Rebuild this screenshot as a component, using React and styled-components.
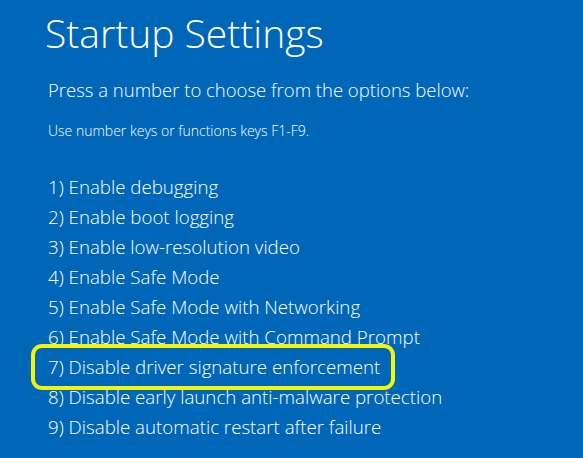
import React from 'react';
import styled, { createGlobalStyle } from 'styled-components';

const GlobalStyle = createGlobalStyle`
  html, body {
    margin: 0;
    padding: 0;
    background-color: #0067b8;
  }
`;

const Screen = styled.main`
  box-sizing: border-box;
  width: 583px;
  height: 458px;
  padding: 6px 0 0 45px;
  background-color: #0067b8;
  color: #ffffff;
  font-family: 'Open Sans', 'Noto Sans', sans-serif;
  overflow: hidden;
`;

const Title = styled.h1`
  margin: 0;
  font-size: 39px;
  font-weight: 300;
  line-height: 54px;
`;

const Prompt = styled.p`
  margin: 17px 0 0 3px;
  font-size: 18.5px;
  font-weight: 300;
  line-height: 26px;
`;

const Hint = styled.p`
  margin: 18px 0 0 3px;
  font-size: 14px;
  font-weight: 300;
  line-height: 20px;
`;

const OptionList = styled.ol`
  list-style: none;
  margin: 31px 0 0 3px;
  padding: 0;
`;

const Option = styled.li`
  position: relative;
  width: fit-content;
  font-size: 18.7px;
  font-weight: 300;
  line-height: 30px;

  ${({ $highlighted }) =>
    $highlighted &&
    `
    &::after {
      content: '';
      position: absolute;
      inset: -8px -15px -8px -17px;
      border: 4px solid #f4f40a;
      border-radius: 11px;
    }
  `}
`;

const options = [
  'Enable debugging',
  'Enable boot logging',
  'Enable low-resolution video',
  'Enable Safe Mode',
  'Enable Safe Mode with Networking',
  'Enable Safe Mode with Command Prompt',
  'Disable driver signature enforcement',
  'Disable early launch anti-malware protection',
  'Disable automatic restart after failure',
];

export default function App() {
  return (
    <>
      <GlobalStyle />
      <Screen>
        <Title>Startup Settings</Title>
        <Prompt>Press a number to choose from the options below:</Prompt>
        <Hint>Use number keys or functions keys F1-F9.</Hint>
        <OptionList>
          {options.map((label, i) => (
            <Option key={label} $highlighted={i === 6}>
              {i + 1}) {label}
            </Option>
          ))}
        </OptionList>
      </Screen>
    </>
  );
}
